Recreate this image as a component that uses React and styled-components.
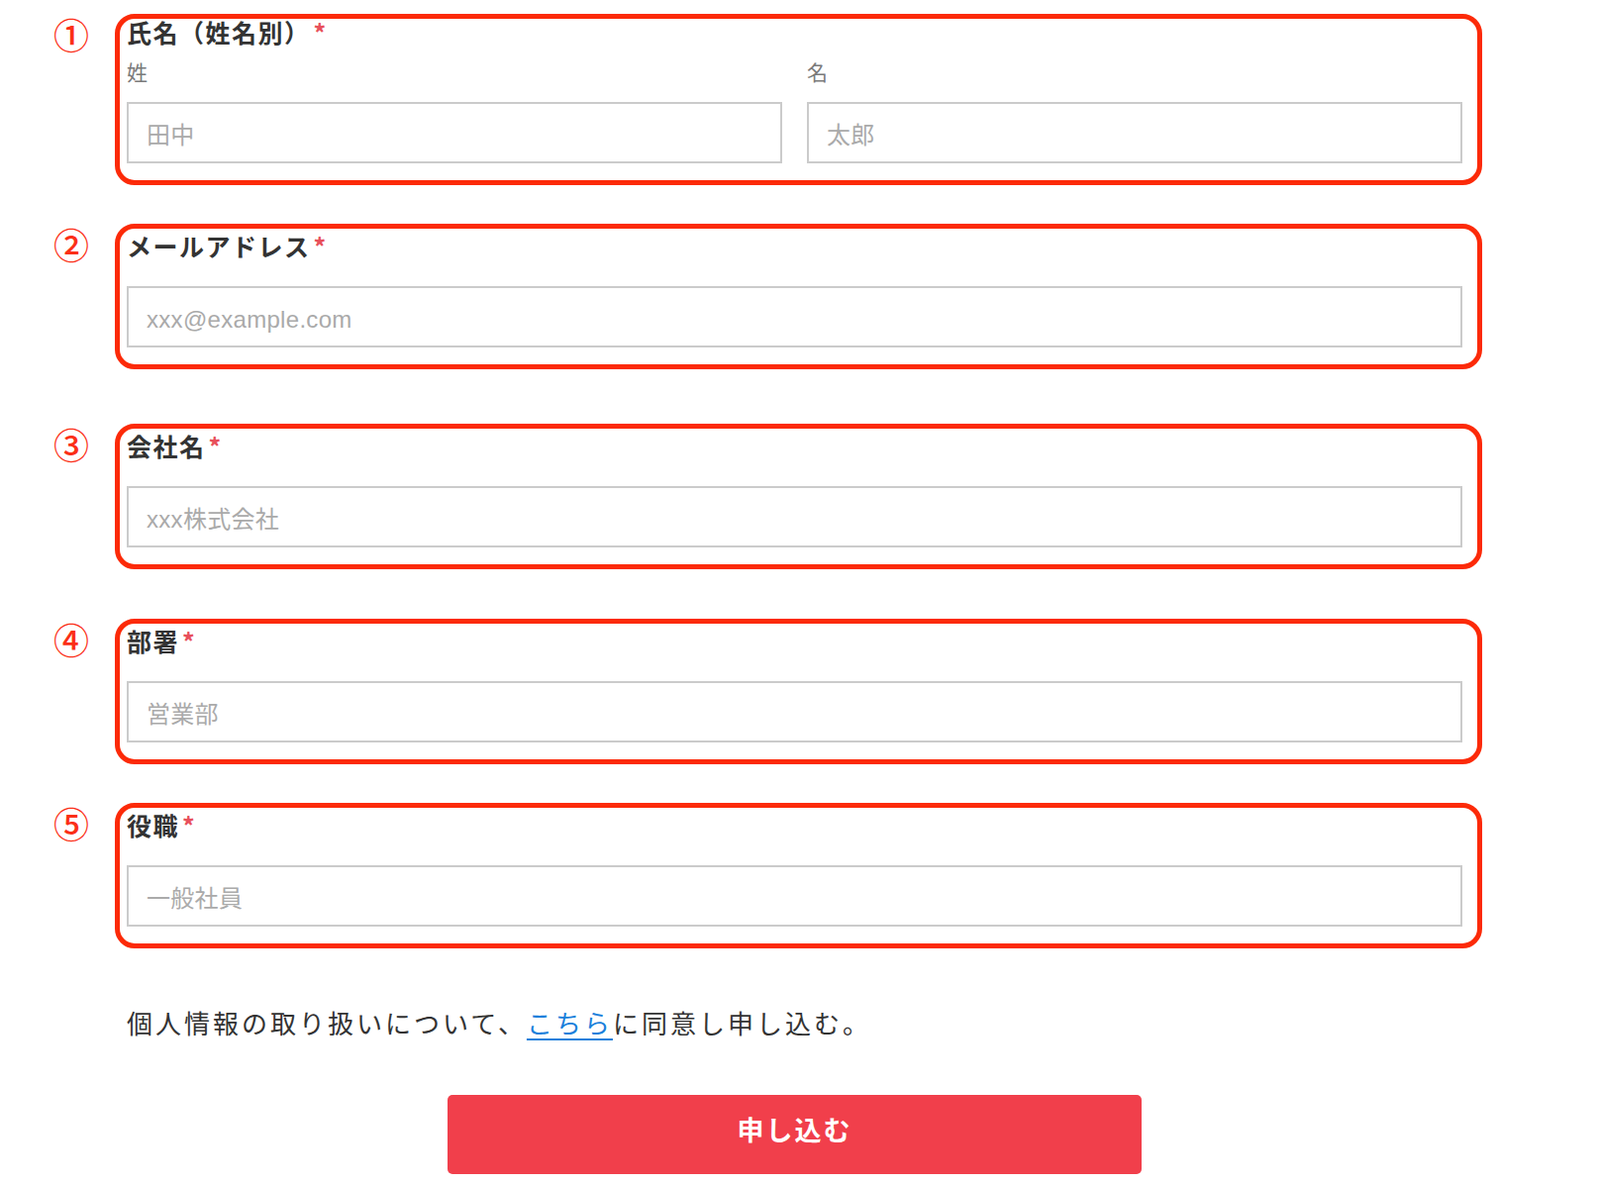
import React from 'react';
import styled, { createGlobalStyle } from 'styled-components';

const GlobalStyle = createGlobalStyle`
  body {
    margin: 0;
    background: #fff;
    font-family: "Liberation Sans", "Noto Sans CJK JP", sans-serif;
    color: #333;
  }
`;

// lift: the first label sits a little higher in its frame
const fields = [
  { no: '①', label: '氏名（姓名別）', top: 14, lift: 4, split: [{ sub: '姓', ph: '田中' }, { sub: '名', ph: '太郎' }] },
  { no: '②', label: 'メールアドレス', top: 39, lift: 0, ph: 'xxx@example.com', type: 'email' },
  { no: '③', label: '会社名', top: 55, lift: 0, ph: 'xxx株式会社' },
  { no: '④', label: '部署', top: 50, lift: 0, ph: '営業部' },
  { no: '⑤', label: '役職', top: 39, lift: 0, ph: '一般社員' },
];

const App = () => (
  <Page>
    <GlobalStyle />
    <form onSubmit={e => e.preventDefault()}>
      {fields.map(f => (
        <Row key={f.no} $top={f.top}>
          <NumberCol>
            <Circled>{f.no}</Circled>
          </NumberCol>
          <FieldBox>
            <Label $lift={f.lift}>
              {f.label}
              <Required>*</Required>
            </Label>
            {f.split ? (
              <SplitGrid>
                {f.split.map(s => (
                  <div key={s.sub}>
                    <SubLabel>{s.sub}</SubLabel>
                    <TextInput $gap={17} placeholder={s.ph} />
                  </div>
                ))}
              </SplitGrid>
            ) : (
              <TextInput $gap={25} type={f.type || 'text'} placeholder={f.ph} />
            )}
          </FieldBox>
        </Row>
      ))}
      <Footer>
        <Consent>
          個人情報の取り扱いについて、<ConsentLink href="#privacy">こちら</ConsentLink>に同意し申し込む。
        </Consent>
        <SubmitButton type="submit">申し込む</SubmitButton>
      </Footer>
    </form>
  </Page>
);

const Page = styled.div`
  width: 1616px;
  min-height: 1196px;
  box-sizing: border-box;
`;

const Row = styled.div`
  display: flex;
  margin-top: ${p => p.$top}px;
`;

const NumberCol = styled.div`
  flex: none;
  width: 116px;
  padding-left: 54px;
  box-sizing: border-box;
`;

const Circled = styled.span`
  display: block;
  width: 36px;
  margin-top: 2px;
  text-align: center;
  font-family: "Noto Sans CJK JP", sans-serif;
  font-size: 36px;
  font-weight: 500;
  line-height: 36px;
  color: #fb2f17;
`;

const FieldBox = styled.div`
  flex: none;
  width: 1381px;
  box-sizing: border-box;
  border: 5px solid #fc2a08;
  border-radius: 20px;
  padding: 1px 15px 17px 7px;
`;

const Label = styled.div`
  margin-top: ${p => -p.$lift}px;
  font-family: "Noto Sans CJK JP", sans-serif;
  font-size: 25px;
  font-weight: 700;
  line-height: 32px;
  letter-spacing: 1.5px;
  color: #333;
`;

const Required = styled.span`
  margin-left: 3px;
  color: #e8505b;
  font-weight: 700;
`;

const SplitGrid = styled.div`
  display: grid;
  grid-template-columns: 1fr 1fr;
  column-gap: 25px;
  margin-top: 10px;
`;

const SubLabel = styled.div`
  font-family: "Noto Sans CJK JP", sans-serif;
  font-size: 21px;
  line-height: 28px;
  color: #7a7a7a;
`;

const TextInput = styled.input`
  display: block;
  width: 100%;
  height: 62px;
  margin-top: ${p => p.$gap}px;
  box-sizing: border-box;
  border: 2px solid #cbcbcb;
  border-radius: 0;
  padding: 5px 18px 0;
  font-family: "Liberation Sans", "Noto Sans CJK JP", sans-serif;
  font-size: 24px;
  letter-spacing: 0.3px;
  color: #333;
  background: #fff;
  outline: none;

  &::placeholder {
    color: #aaa;
  }
`;

const Footer = styled.div`
  width: 1349px;
  margin-left: 128px;
`;

const Consent = styled.p`
  margin: 57px 0 0;
  font-family: "Noto Sans CJK JP", sans-serif;
  font-size: 26px;
  line-height: 36px;
  letter-spacing: 3px;
  color: #333;
`;

const ConsentLink = styled.a`
  color: #1a7fdb;
  text-decoration: underline;
  text-decoration-thickness: 2px;
  text-underline-offset: 5px;
`;

const SubmitButton = styled.button`
  display: block;
  width: 701px;
  height: 80px;
  margin: 55px auto 0;
  padding: 0 0 12px;
  border: none;
  border-radius: 5px;
  background: #f13f4b;
  color: #fff;
  font-family: "Noto Sans CJK JP", sans-serif;
  font-size: 27px;
  font-weight: 700;
  letter-spacing: 2px;
  cursor: pointer;
`;

export default App;
